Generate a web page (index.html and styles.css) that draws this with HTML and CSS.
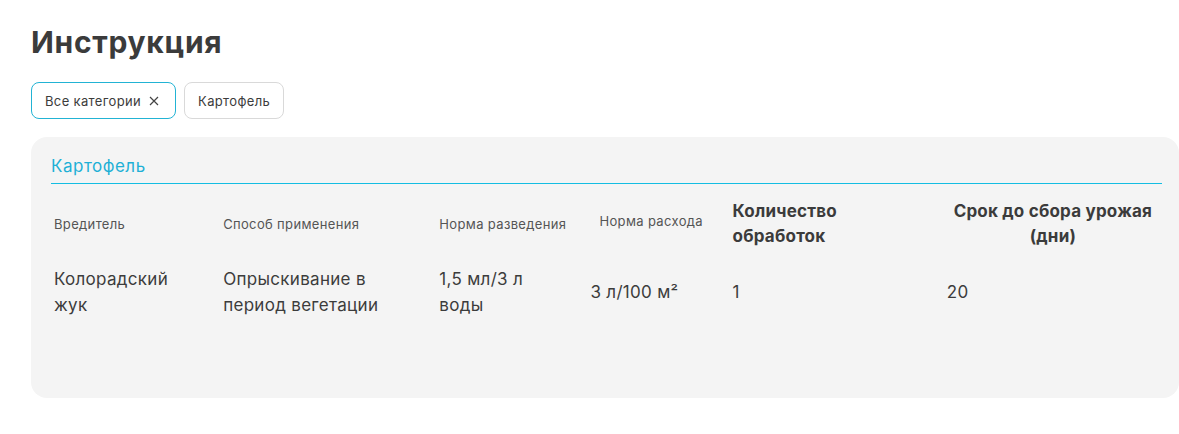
FILE: index.html
```html
<!DOCTYPE html>
<html lang="ru">
<head>
<meta charset="utf-8">
<title>Инструкция</title>
<link rel="stylesheet" href="styles.css">
</head>
<body>
<main class="page">
  <h1 class="title">Инструкция</h1>
  <div class="chips">
    <button class="chip chip-active">Все категории
      <svg class="chip-x" width="10" height="10" viewBox="0 0 10 10"><path d="M1 1L9 9M9 1L1 9" stroke="#444" stroke-width="1.2" fill="none"/></svg>
    </button>
    <button class="chip">Картофель</button>
  </div>
  <section class="card">
    <h2 class="card-title">Картофель</h2>
    <div class="card-rule"></div>
    <table class="grid">
      <colgroup>
        <col class="c1"><col class="c2"><col class="c3"><col class="c4"><col class="c5"><col class="c6">
      </colgroup>
      <thead>
        <tr>
          <th class="h-small">Вредитель</th>
          <th class="h-small">Способ применения</th>
          <th class="h-small">Норма разведения</th>
          <th class="h-small h-shift">Норма расхода</th>
          <th class="h-bold">Количество<br>обработок</th>
          <th class="h-bold h-center">Срок до сбора урожая<br>(дни)</th>
        </tr>
      </thead>
      <tbody>
        <tr>
          <td>Колорадский<br>жук</td>
          <td>Опрыскивание в<br>период вегетации</td>
          <td>1,5 мл/3 л<br>воды</td>
          <td>3 л/100 м²</td>
          <td>1</td>
          <td>20</td>
        </tr>
      </tbody>
    </table>
  </section>
</main>
</body>
</html>
```
FILE: styles.css
```css
* { box-sizing: border-box; }
html, body { margin: 0; background: #fff; }
body {
  font-family: "Inter", "Noto Sans", sans-serif;
  color: #3c3c3c;
}
.page {
  padding: 22px 0 0 31px;
}
.title {
  margin: 0;
  font-size: 30px;
  line-height: 40px;
  font-weight: 700;
  color: #3b3b3b;
  letter-spacing: 0.7px;
}
.chips {
  display: flex;
  gap: 8px;
  margin-top: 20px;
}
.chip {
  height: 37px;
  padding: 0 13px 0 13px;
  border: 1px solid #d9d9d9;
  border-radius: 8px;
  background: #fff;
  font-family: inherit;
  font-size: 13px;
  letter-spacing: 0.35px;
  color: #3c3c3c;
  display: flex;
  align-items: center;
  gap: 8px;
}
.chip-active {
  border-color: #22b3d4;
  padding-right: 16px;
}
.chip-x { display: block; }
.card {
  margin-top: 18px;
  height: 261px;
  background: #f4f4f4;
  border-radius: 16px;
  padding: 18px 17px 0 20px;
}
.card-title {
  margin: 0;
  font-size: 17px;
  font-weight: 400;
  line-height: 22px;
  letter-spacing: 0.5px;
  color: #1eb0d6;
  padding-bottom: 6px;
}
.card-rule {
  height: 1px;
  background: #14bde2;
}
.grid {
  width: 100%;
  border-collapse: collapse;
  table-layout: fixed;
  margin-top: 12px;
}
.c1 { width: 169px; }
.c2 { width: 216px; }
.c3 { width: 151px; }
.c4 { width: 142px; }
.c5 { width: 214px; }
.c6 { width: 218px; }
th {
  text-align: left;
  vertical-align: middle;
  padding: 0 0 0 3px;
  height: 56px;
}
.h-small {
  font-size: 13px;
  font-weight: 400;
  letter-spacing: 0.35px;
  color: #555;
}
.h-shift { padding-left: 12px; padding-bottom: 6px; }
.h-bold {
  font-size: 17px;
  font-weight: 700;
  line-height: 25px;
  letter-spacing: 0.2px;
  color: #3b3b3b;
}
.h-center { text-align: center; padding-left: 0; }
td {
  font-size: 17px;
  line-height: 26px;
  letter-spacing: 0.3px;
  color: #3c3c3c;
  padding: 14px 0 0 3px;
  vertical-align: middle;
}
```
